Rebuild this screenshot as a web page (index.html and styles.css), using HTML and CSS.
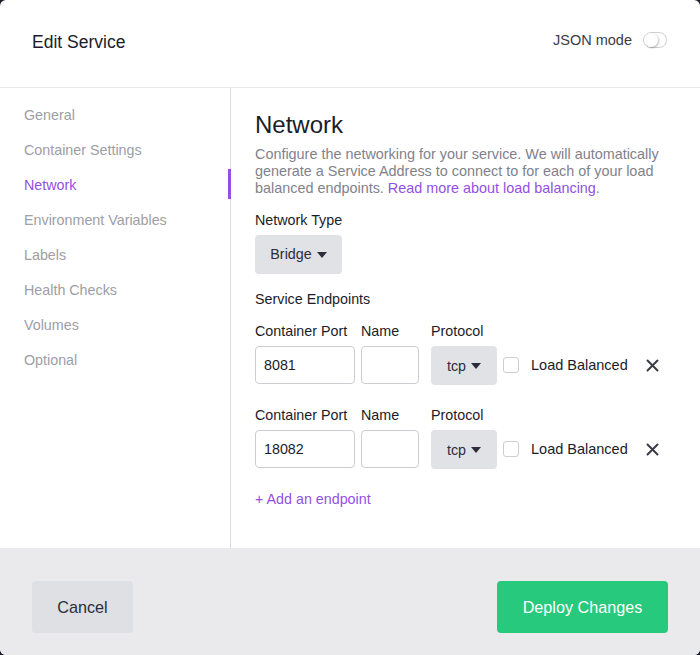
FILE: index.html
```html
<!DOCTYPE html>
<html>
<head>
<meta charset="utf-8">
<link rel="stylesheet" href="styles.css">
</head>
<body>
<div class="modal">
  <header class="modal-header">
    <h1 class="title">Edit Service</h1>
    <div class="json-mode">
      <span>JSON mode</span>
      <span class="toggle"><span class="knob"></span></span>
    </div>
  </header>
  <div class="modal-body">
    <nav class="sidebar">
      <a class="nav-item">General</a>
      <a class="nav-item">Container Settings</a>
      <a class="nav-item active">Network</a>
      <a class="nav-item">Environment Variables</a>
      <a class="nav-item">Labels</a>
      <a class="nav-item">Health Checks</a>
      <a class="nav-item">Volumes</a>
      <a class="nav-item">Optional</a>
    </nav>
    <main class="content">
      <h2 class="heading">Network</h2>
      <p class="desc"><span>Configure the networking for your service. We will automatically generate a Service Address to connect to for each of your load balanced endpoints.</span> <a class="link">Read more about load balancing</a><span>.</span></p>
      <div class="label mt-type">Network Type</div>
      <button class="select-btn bridge">Bridge <span class="caret"></span></button>
      <div class="label mt-section">Service Endpoints</div>

      <div class="endpoint first">
        <div class="field port">
          <div class="label">Container Port</div>
          <div class="input">8081</div>
        </div>
        <div class="field name">
          <div class="label">Name</div>
          <div class="input"></div>
        </div>
        <div class="field proto">
          <div class="label">Protocol</div>
          <div class="select-btn small">tcp <span class="caret"></span></div>
        </div>
        <div class="check"><span class="box"></span><span>Load Balanced</span></div>
        <svg class="close" width="13" height="13" viewBox="0 0 13 13"><path d="M1.5 1.5 L11.5 11.5 M11.5 1.5 L1.5 11.5" stroke="#3a3c48" stroke-width="2" stroke-linecap="round"/></svg>
      </div>

      <div class="endpoint">
        <div class="field port">
          <div class="label">Container Port</div>
          <div class="input">18082</div>
        </div>
        <div class="field name">
          <div class="label">Name</div>
          <div class="input"></div>
        </div>
        <div class="field proto">
          <div class="label">Protocol</div>
          <div class="select-btn small">tcp <span class="caret"></span></div>
        </div>
        <div class="check"><span class="box"></span><span>Load Balanced</span></div>
        <svg class="close" width="13" height="13" viewBox="0 0 13 13"><path d="M1.5 1.5 L11.5 11.5 M11.5 1.5 L1.5 11.5" stroke="#3a3c48" stroke-width="2" stroke-linecap="round"/></svg>
      </div>

      <a class="link add">+ Add an endpoint</a>
    </main>
  </div>
  <footer class="modal-footer">
    <button class="btn cancel">Cancel</button>
    <button class="btn deploy">Deploy Changes</button>
  </footer>
</div>
</body>
</html>
```

FILE: styles.css
```css
* { box-sizing: border-box; }
html, body {
  margin: 0;
  padding: 0;
  background: #1c1d2b;
  font-family: "Liberation Sans", Arial, sans-serif;
}
.modal {
  width: 700px;
  height: 655px;
  background: #fff;
  border-radius: 6px;
  overflow: hidden;
  display: flex;
  flex-direction: column;
}
.modal-header {
  height: 88px;
  border-bottom: 1px solid #e8e8ea;
  display: flex;
  align-items: center;
  justify-content: space-between;
  padding: 0 33px 2px 32px;
  flex: none;
}
.title {
  margin: 0;
  font-size: 17.5px;
  font-weight: normal;
  color: #1b1c2a;
}
.json-mode {
  display: flex;
  align-items: center;
  gap: 11px;
  font-size: 14.5px;
  color: #3a3c48;
  margin-top: -5px;
}
.toggle {
  width: 24px;
  height: 16px;
  border: 1px solid #cfd0d4;
  border-radius: 8px;
  position: relative;
  background: #fff;
}
.knob {
  position: absolute;
  left: 0;
  top: 0;
  width: 14px;
  height: 14px;
  border-radius: 50%;
  background: #fff;
  box-shadow: 1px 1px 2px rgba(0,0,0,0.25);
}
.modal-body {
  flex: 1;
  display: flex;
}
.sidebar {
  width: 231px;
  border-right: 1px solid #dcdce0;
  padding-top: 10px;
  display: flex;
  flex-direction: column;
  flex: none;
}
.nav-item {
  height: 35px;
  line-height: 35px;
  padding-left: 24px;
  font-size: 14.3px;
  color: #9d9ea6;
  position: relative;
}
.nav-item.active { color: #9350e4; }
.nav-item.active::after {
  content: "";
  position: absolute;
  right: -1px;
  top: 1px;
  width: 3px;
  height: 30px;
  background: #9350e4;
}
.content {
  flex: 1;
  padding: 23px 24px 0 24px;
}
.heading {
  margin: 0;
  font-size: 24px;
  line-height: 28px;
  font-weight: normal;
  color: #1b1c2a;
}
.desc {
  margin: 7px 0 0 0;
  font-size: 14.4px;
  line-height: 17px;
  color: #7f828d;
}
.link { color: #9350e4; }
.label {
  font-size: 14.3px;
  line-height: 17px;
  color: #1b1c2a;
}
.mt-type { margin-top: 14.5px; }
.mt-section { margin-top: 16.5px; }
.select-btn {
  background: #e1e2e6;
  border: none;
  border-radius: 4px;
  font-family: inherit;
  font-size: 14.3px;
  color: #2b2d3a;
  display: flex;
  align-items: center;
  justify-content: center;
  gap: 5px;
}
.bridge {
  margin-top: 6.5px;
  width: 87px;
  height: 39px;
  padding: 0 0 1px 0;
}
.caret {
  width: 0;
  height: 0;
  border-left: 5px solid transparent;
  border-right: 5px solid transparent;
  border-top: 6px solid #2b2d3a;
  margin-top: 1px;
}
.endpoint {
  display: flex;
  align-items: flex-end;
  margin-top: 22.5px;
}
.endpoint.first { margin-top: 15px; }
.field {
  display: flex;
  flex-direction: column;
  gap: 6.5px;
}
.port { width: 100px; margin-right: 6px; }
.name { width: 58px; margin-right: 12px; }
.proto { width: 66px; margin-right: 6px; }
.input {
  height: 38px;
  border: 1px solid #cdced3;
  border-radius: 4px;
  font-size: 14.3px;
  color: #1b1c2a;
  padding-left: 8px;
  display: flex;
  align-items: center;
}
.small {
  height: 39px;
  margin-bottom: -1px;
}
.check {
  height: 38px;
  display: flex;
  align-items: center;
  gap: 12px;
  font-size: 14.5px;
  color: #1b1c2a;
}
.box {
  width: 16px;
  height: 16px;
  border: 1px solid #cdced3;
  border-radius: 3px;
  background: #fff;
}
.close {
  margin-left: 18px;
  margin-bottom: 12.5px;
}
.add {
  display: block;
  margin-top: 22.5px;
  font-size: 14.3px;
  line-height: 17px;
}
.modal-footer {
  height: 107px;
  background: #eaeaec;
  display: flex;
  align-items: flex-start;
  justify-content: space-between;
  padding: 33px 32px 0 32px;
  flex: none;
}
.btn {
  height: 52px;
  border: none;
  border-radius: 4px;
  font-family: inherit;
  font-size: 16.2px;
}
.cancel {
  width: 101px;
  background: #dfe0e4;
  color: #2b2d3a;
}
.deploy {
  width: 171px;
  background: #27c97c;
  color: #fff;
}
```
